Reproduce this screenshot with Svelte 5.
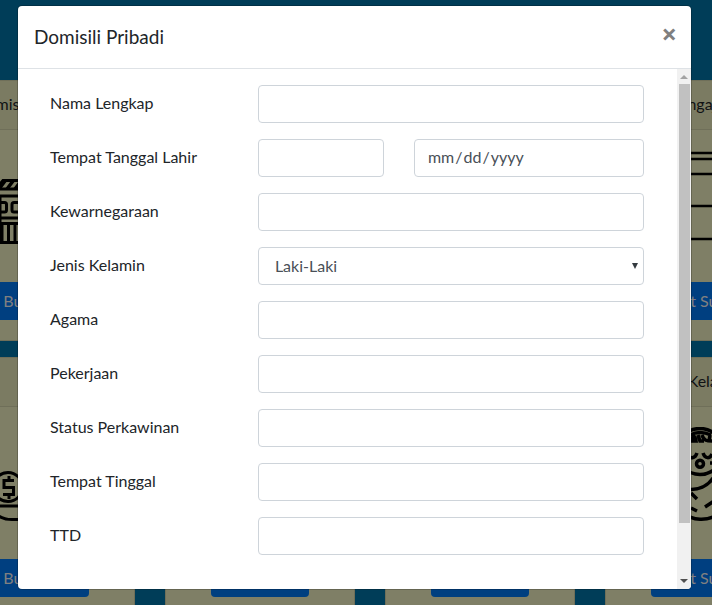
<script>
  const cards = [
    { title: 'Domisili Penduduk', icon: 'shop' },
    { title: 'Domisili Usaha', icon: '' },
    { title: 'Tidak Mampu', icon: '' },
    { title: 'Pengajar', icon: 'lines' },
    { title: 'Usaha', icon: 'coin' },
    { title: 'Kematian', icon: '' },
    { title: 'Pindah', icon: '' },
    { title: 'Surat Kelahiran', icon: 'baby' }
  ];
  const after = ['Agama', 'Pekerjaan', 'Status Perkawinan', 'Tempat Tinggal', 'TTD'];
</script>

<div class="page">
  <main class="cards">
    {#each cards as card}
      <article class="card">
        <h2>{card.title}</h2>
        <div class="body">
          <svg viewBox="-20 0 120 112" width="120" height="112" fill="none" stroke="#000" stroke-width="3" aria-hidden="true">
            {#if card.icon === 'shop'}
              <path d="M-4 39L3 30.5H77L84 39ZM-2 46H82M0 46V92.5M80 46V92.5M0 68H80M0 73.5H80M0 92.5H80" />
              <path d="M-1 39l6-8M7 39l6-8M15 39l6-8M23 39l6-8M31 39l6-8M39 39l6-8M47 39l6-8M55 39l6-8M63 39l6-8M71 39l6-8" stroke-width="3.5" />
              <rect x="-4" y="52.5" width="10.5" height="9.5" rx="2" />
              <rect x="12" y="52.5" width="11" height="9.5" rx="2" />
              <rect x="29" y="52.5" width="11" height="9.5" rx="2" />
              <path d="M2 74V92M8.5 74V92M15 74V92M21.5 74V92M28 74V92" />
            {:else if card.icon === 'lines'}
              <path d="M-4 3H84M-4 9H84M-4 24H84M-4 56H84M-4 89H84" stroke-width="2.5" />
            {:else if card.icon === 'coin'}
              <circle cx="8" cy="60" r="14.5" />
              <path d="M9 49V53M14 53.5H4V60.5H13.5V67.5H3M9 68V72M-10 79H60M-8 80C-4 90 4 92.5 12 92.5H60" />
            {:else if card.icon === 'baby'}
              <g stroke-width="3.5">
                <circle cx="40" cy="24.5" r="23" />
                <path d="M30 8C36 5 44 5 51 8M31 14C33 8 35 8 36 14H30M38 8L40 14H44M42 8C44 14 47 14 52 14M50 8L49 14" />
                <path d="M28 28C30 32 35 32 37 26M43 26C45 32 50 32 52 27M50 36H54" />
                <circle cx="40" cy="36.7" r="3.5" />
                <path d="M26 62C38 64 48 59 54 50M31 66L37 72M31 81L37 84M45 80L54 74M24 86C32 94 48 94 56 88" />
              </g>
            {/if}
          </svg>
          <button type="button">Buat Surat</button>
        </div>
      </article>
    {/each}
  </main>
  <div class="backdrop">
    <section class="modal" role="dialog" aria-modal="true" aria-labelledby="title">
      <header>
        <h1 id="title">Domisili Pribadi</h1>
        <button type="button" class="close" aria-label="Close">×</button>
      </header>
      <div class="scroller">
        <form>
          <div class="row"><label for="nama">Nama Lengkap</label><input id="nama" /></div>
          <div class="row">
            <label for="tempat">Tempat Tanggal Lahir</label>
            <div class="pair"><input id="tempat" /><input type="date" aria-label="Tanggal Lahir" /></div>
          </div>
          <div class="row"><label for="warga">Kewarnegaraan</label><input id="warga" /></div>
          <div class="row">
            <label for="jk">Jenis Kelamin</label>
            <div class="select"><select id="jk"><option>Laki-Laki</option><option>Perempuan</option></select><span></span></div>
          </div>
          {#each after as name}
            <div class="row"><label for={name}>{name}</label><input id={name} /></div>
          {/each}
        </form>
        <div class="bar" aria-hidden="true"><i class="up"></i><b></b><i class="down"></i></div>
      </div>
    </section>
  </div>
</div>

<style>
  :global(body) { margin: 0; }
  * { box-sizing: border-box; }
  .page { position: relative; height: 100vh; overflow: hidden; background: #003d58; color: #212529; font: 16px/24px Lato, "Open Sans", sans-serif; }
  button, input, select { font: inherit; }
  .cards { display: grid; grid-template-columns: repeat(4, 190px); gap: 16px 30px; margin: 80px 0 0 -55px; }
  .card { height: 261px; background: #7f7f66; border: 1px solid #6f6f59; text-align: center; }
  h2 { margin: 0; padding: 11px 0 13px; height: 49px; font-size: 16px; font-weight: 400; line-height: 24px; white-space: nowrap; color: #101214; background: #7b7b62; border-bottom: 1px solid #6f6f59; }
  .body { padding: 20px; display: flex; flex-direction: column; align-items: center; gap: 20px; }
  svg { display: block; }
  .body button { width: 98px; height: 38px; flex: none; padding: 0; border: 0; border-radius: 4px; background: #003f80; color: #808080; }
  .backdrop { position: absolute; inset: 0; padding: 6px 21px 16px 18px; }
  .modal { height: 100%; display: flex; flex-direction: column; background: #fff; border-radius: 4px; overflow: hidden; box-shadow: 0 0 0 1px rgba(0, 0, 0, .2); }
  header { display: flex; justify-content: space-between; align-items: center; height: 63px; flex: none; padding: 0 14px 0 16px; border-bottom: 1px solid #dee2e6; }
  h1 { margin: 0; font-size: 19px; line-height: 30px; font-weight: 400; }
  .close { padding: 0 0 6px; border: 0; background: none; font: 700 27px/24px "Open Sans", sans-serif; color: #7f7f7f; }
  .scroller { flex: 1; min-height: 0; display: flex; }
  form { flex: 1; min-width: 0; padding: 16px 33px 16px 32px; display: flex; flex-direction: column; gap: 16px; }
  .row { display: grid; grid-template-columns: 35fr 65fr; align-items: center; }
  label { padding-bottom: 2px; }
  input, select { width: 100%; min-width: 0; height: 38px; padding: 5px 12px 7px; border: 1px solid #ced4da; border-radius: 4px; background: #fff; color: #495057; }
  input::-webkit-calendar-picker-indicator { display: none; }
  .pair { display: grid; grid-template-columns: 126fr 230fr; gap: 30px; }
  .select { position: relative; }
  select { display: block; appearance: none; padding: 6px 16px; }
  .select span { position: absolute; right: 6px; top: 16px; border: 3px solid transparent; border-top: 6px solid #343a40; border-bottom: 0; pointer-events: none; }
  .bar { width: 14px; flex: none; display: flex; flex-direction: column; align-items: center; background: #f1f1f1; padding: 6px 0; gap: 5px; }
  .bar b { width: 11px; flex: 1; background: #c1c1c1; margin-bottom: 51px; }
  .bar i { border: 4px solid transparent; }
  .bar .up { border-top: 0; border-bottom-color: #a3a3a3; }
  .bar .down { border-bottom: 0; border-top-color: #505050; }
</style>
